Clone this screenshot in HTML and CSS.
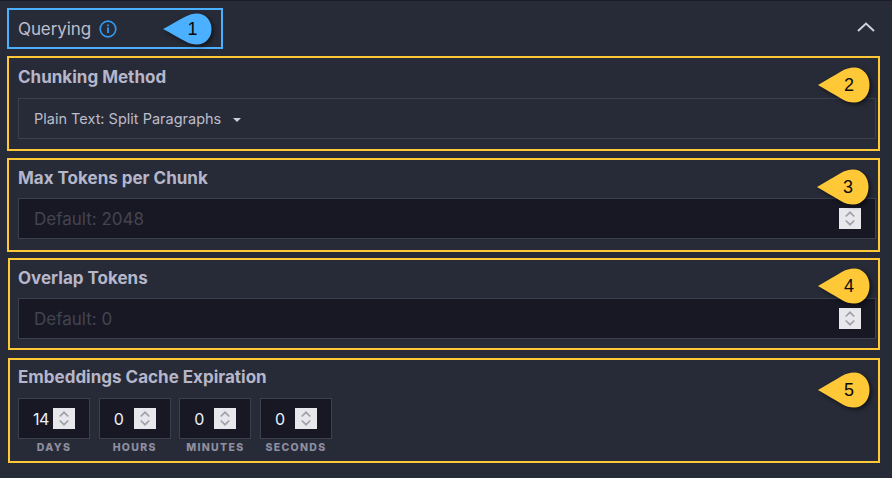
FILE: index.html
```html
<!DOCTYPE html>
<html lang="en">
<head>
<meta charset="utf-8">
<title>Querying</title>
<link rel="stylesheet" href="styles.css">
</head>
<body>
<svg class="defs" width="0" height="0" aria-hidden="true">
  <symbol id="drop" viewBox="0 0 52 36" preserveAspectRatio="none"><path d="M0 18 C8 13.500 16 8.500 23 4.500 C28 1.500 32 0.500 36 0.500 C45 0.500 51.500 8 51.500 18 C51.500 28 45 35.500 36 35.500 C32 35.500 28 34.500 23 31.500 C16 27.500 8 22.500 0 18 Z"/></symbol>
  <symbol id="spin" viewBox="0 0 22 21"><path d="M6.700 8.500 L11 4.300 L15.300 8.500 M6.700 12.500 L11 16.700 L15.300 12.500" fill="none" stroke="#a0a0ac" stroke-width="1.700"/></symbol>
</svg>
<main class="panel">
  <header class="head">
    <div class="note note-blue">
      <span class="title">Querying</span>
      <svg class="info" viewBox="0 0 18 18"><circle cx="9" cy="9" r="7.800" fill="none" stroke="#2f9bf0" stroke-width="1.700"/><rect x="8.100" y="7.500" width="1.800" height="5.500" fill="#2f9bf0"/><rect x="8.100" y="4.500" width="1.800" height="1.800" fill="#2f9bf0"/></svg>
      <div class="callout blue c1"><svg><use href="#drop"/></svg><span>1</span></div>
    </div>
    <svg class="collapse" viewBox="0 0 18 10"><path d="M1 9 L9 1.500 L17 9" fill="none" stroke="#cfcfe0" stroke-width="2"/></svg>
  </header>

  <section class="note s1">
    <h3>Chunking Method</h3>
    <div class="field select"><span>Plain Text: Split Paragraphs</span><i class="caret"></i></div>
    <div class="callout yellow c2"><svg><use href="#drop"/></svg><span>2</span></div>
  </section>

  <section class="note s2">
    <h3>Max Tokens per Chunk</h3>
    <div class="field num"><span class="ph">Default: 2048</span><svg class="spin"><use href="#spin"/></svg></div>
    <div class="callout yellow c3"><svg><use href="#drop"/></svg><span>3</span></div>
  </section>

  <section class="note s3">
    <h3>Overlap Tokens</h3>
    <div class="field num"><span class="ph">Default: 0</span><svg class="spin"><use href="#spin"/></svg></div>
    <div class="callout yellow c4"><svg><use href="#drop"/></svg><span>4</span></div>
  </section>

  <section class="note s4">
    <h3>Embeddings Cache Expiration</h3>
    <div class="times">
      <div class="time"><div class="tbox"><span>14</span><svg class="spin"><use href="#spin"/></svg></div><label>DAYS</label></div>
      <div class="time"><div class="tbox"><span>0</span><svg class="spin"><use href="#spin"/></svg></div><label>HOURS</label></div>
      <div class="time"><div class="tbox"><span>0</span><svg class="spin"><use href="#spin"/></svg></div><label>MINUTES</label></div>
      <div class="time"><div class="tbox"><span>0</span><svg class="spin"><use href="#spin"/></svg></div><label>SECONDS</label></div>
    </div>
    <div class="callout yellow c5"><svg><use href="#drop"/></svg><span>5</span></div>
  </section>
</main>
</body>
</html>
```
FILE: styles.css
```css
* { box-sizing: border-box; }
html, body { margin: 0; height: 100%; }
body {
  background: #272b37;
  font-family: Inter, "Noto Sans", sans-serif;
  overflow: hidden;
}
.defs { position: absolute; }
.panel {
  width: 892px;
  height: 478px;
  border-top: 1px solid #1b1d27;
  padding: 7px 12px 0 7px;
  display: flex;
  flex-direction: column;
}
.head {
  display: flex;
  align-items: center;
  justify-content: space-between;
  height: 41px;
  margin-bottom: 7px;
}
.note {
  position: relative;
  border: 2px solid #ffc837;
  padding: 6px 2px 0 9px;
  display: flex;
  flex-direction: column;
}
.note-blue {
  border-color: #4ab0ff;
  width: 216px;
  height: 41px;
  flex-direction: row;
  align-items: center;
  padding: 0 0 0 9px;
}
.title { font-size: 17px; color: #bdbdcb; letter-spacing: -0.100px; }
.info { width: 18px; height: 18px; margin-left: 8px; }
.collapse { width: 18px; height: 10px; margin: 0 5px 3px 0; }
.s1 { height: 95px; margin-bottom: 7px; padding-top: 8px; }
.s2 { height: 94px; margin-bottom: 6px; padding-top: 7px; }
.s3 { height: 92px; margin: 0 0 8px 1px; padding: 7px 2px 0 8px; }
.s4 { height: 105px; margin-left: 1px; padding-left: 8px; }
h3 {
  margin: 0 0 10px;
  font-size: 17px;
  line-height: 22px;
  font-weight: 700;
  color: #b6b6ca;
}
.s2 h3, .s3 h3 { margin-bottom: 9px; }
.field {
  height: 41px;
  border: 1px solid #3c404e;
  display: flex;
  align-items: center;
  padding-left: 15px;
  position: relative;
}
.select { font-size: 14.500px; color: #bcbccc; background: #272b37; }
.caret {
  width: 0;
  height: 0;
  margin-left: 12px;
  margin-top: 2px;
  border: 4px solid transparent;
  border-top-color: #cfcfdc;
  border-bottom: 0;
}
.num { background: #181825; justify-content: space-between; padding-right: 14px; }
.ph { font-size: 17px; color: #434450; }
.spin { width: 22px; height: 21px; background: #e8e8ec; display: block; flex: none; }
.times { display: flex; gap: 8.670px; }
.time { width: 72px; display: flex; flex-direction: column; align-items: center; }
.tbox {
  width: 72px;
  height: 41px;
  background: #181825;
  border: 1px solid #3c404e;
  display: flex;
  align-items: center;
  justify-content: space-between;
  padding: 0 14px 0 14px;
  color: #e9f2ff;
  font-size: 16px;
  letter-spacing: -0.500px;
}
label {
  margin-top: 2px;
  font-size: 10.500px;
  line-height: 14px;
  font-weight: 800;
  letter-spacing: 1.300px;
  color: #8e8ea0;
  white-space: nowrap;
}
.callout {
  position: absolute;
  width: 52px;
  height: 36px;
  display: flex;
  align-items: center;
  justify-content: center;
  color: #0a0a0a;
  font-family: "Liberation Sans", Arial, sans-serif;
  font-size: 18px;
}
.callout svg {
  position: absolute;
  inset: 0;
  width: 100%;
  height: 100%;
  filter: drop-shadow(2px 2px 2px rgba(0, 0, 0, .55));
}
.callout span { position: relative; left: 5px; }
.yellow svg { fill: #ffc837; }
.blue svg { fill: #4ab0ff; }
.c1 { left: 154px; top: 3px; width: 49px; height: 32px; }
.c2 { left: 809px; top: 9px; }
.c3 { left: 808px; top: 9px; }
.c4 { left: 808px; top: 8px; }
.c5 { left: 808px; top: 12px; }
```
